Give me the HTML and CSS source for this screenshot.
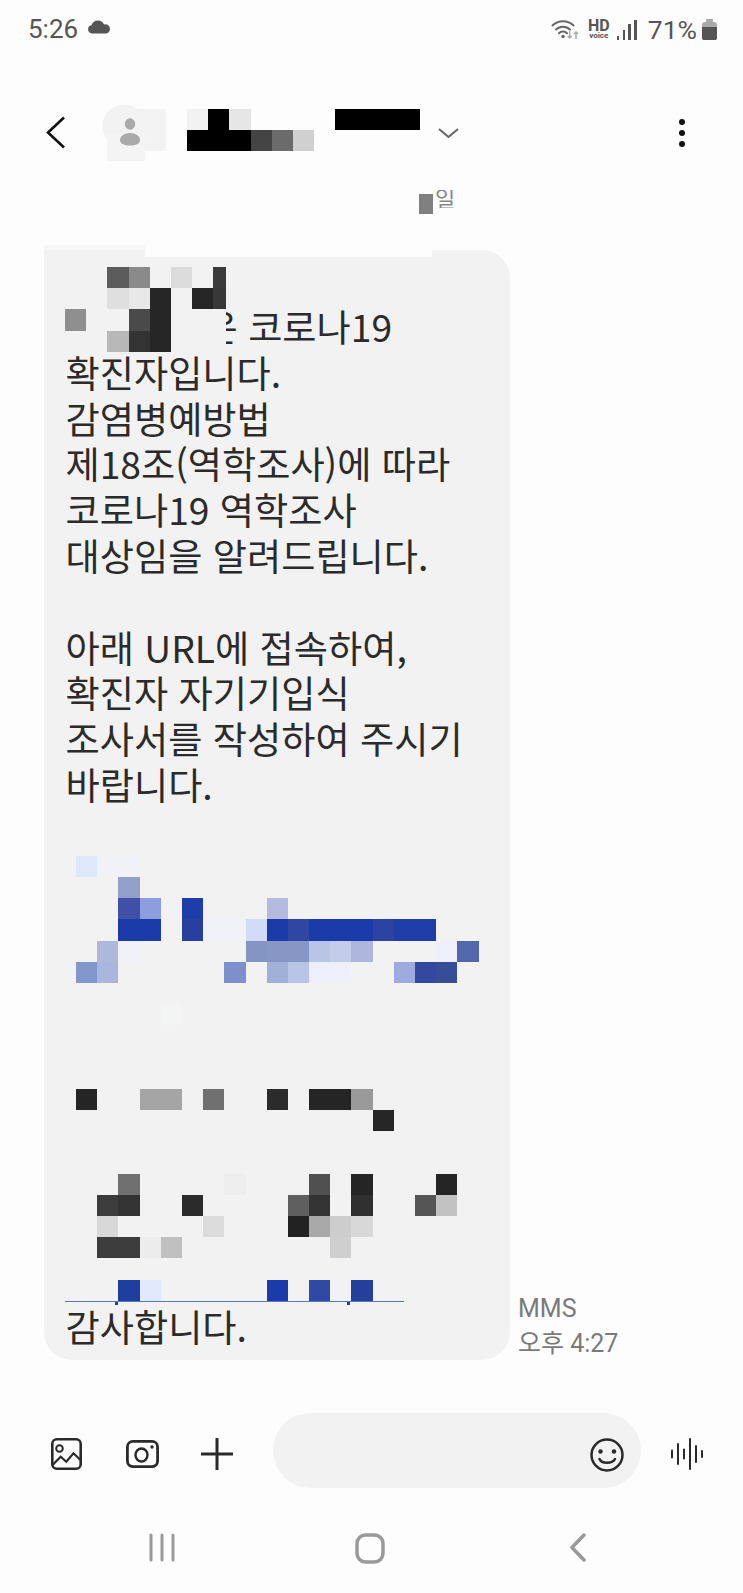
FILE: index.html
```html
<!DOCTYPE html>
<html lang="ko">
  <head>
    <meta charset="UTF-8" />
    <meta name="viewport" content="width=device-width, initial-scale=1.0" />
    <title>메시지</title>
    <link rel="stylesheet" href="styles.css">
  </head>
  <body>
    <!-- 상태 표시줄 -->
    <div class="status">
      <div class="status-left">
        <span class="time">5:26</span>
        <svg class="cloud" width="24" height="14" viewBox="0 0 24 14"><path d="M5 13.5a4.2 4.2 0 0 1-.6-8.3A7 7 0 0 1 11 .5a6.5 6.5 0 0 1 6 3.900a4.700 4.700 0 0 1 2.500 9.100z" fill="#555"/></svg>
      </div>
      <div class="status-right">
        <svg class="wifi" width="30" height="20" viewBox="0 0 30 20" fill="none">
          <g stroke="#666" stroke-width="2" stroke-linecap="round">
            <path d="M1.500 6.500A15 15 0 0 1 22.500 6.500"/>
            <path d="M5 10.500A10 10 0 0 1 19 10.500"/>
            <path d="M8 14.200A5.500 5.500 0 0 1 16 14.200"/>
          </g>
          <circle cx="12" cy="17.500" r="1.700" fill="#666"/>
          <path d="M18.700 12v7M16.700 17l2 2 2-2M25 20v-7M23 15l2-2 2 2" stroke="#aaa" stroke-width="1.500"/>
        </svg>
        <div class="hd"><b>HD</b><small>voice</small></div>
        <div class="signal"><i class="s1"></i><i class="s2"></i><i class="s3"></i><i class="s4"></i></div>
        <span class="pct">71%</span>
        <div class="battery"><i></i></div>
      </div>
    </div>

    <!-- 상단 대화 정보 -->
    <div class="head">
      <svg class="back" width="20" height="33" viewBox="0 0 20 33" fill="none"><path d="M18 1.500 2 16.500l16 15" stroke="#111" stroke-width="2.600"/></svg>
      <svg class="avatar" width="64" height="57" viewBox="0 0 64 57">
        <circle cx="22" cy="22" r="21.500" fill="#f2f2f2"/>
        <rect x="22" y="5" width="42" height="42" fill="#f3f3f3"/>
        <rect x="5" y="30" width="38" height="27" fill="#f4f4f4"/>
        <ellipse cx="28" cy="20" rx="5.200" ry="5.700" fill="#aaa"/>
        <path d="M28 29c5.500 0 10 3 10 7 0 4-4.500 5.500-10 5.500s-10-1.500-10-5.500c0-4 4.500-7 10-7z" fill="#aaa"/>
      </svg>
      <div class="mosaic name">
        <div class="row"><i class="g-f2"></i><i class="g-00"></i><i class="g-e6"></i><i></i><i></i><i></i><i></i><i class="g-00"></i><i class="g-00"></i><i class="g-00"></i><i class="g-00"></i></div>
        <div class="row"><i class="g-00"></i><i class="g-00"></i><i class="g-00"></i><i class="g-44"></i><i class="g-6b"></i><i class="g-d0"></i></div>
      </div>
      <svg class="more-down" width="21" height="10" viewBox="0 0 21 10" fill="none"><path d="M1 1l9.500 8L20 1" stroke="#666" stroke-width="2"/></svg>
      <div class="dots"><i></i><i></i><i></i></div>
    </div>

    <div class="date"><i class="date-bar"></i><span class="date-text">일</span></div>

    <!-- 메시지 -->
    <div class="thread">
      <div class="bubble">
        <div class="censor">
          <div class="mosaic">
            <div class="row"><i></i><i></i><i class="g-5c"></i><i class="g-8a"></i><i></i><i class="g-dc"></i><i></i><i class="g-3b half"></i></div>
            <div class="row"><i></i><i></i><i class="g-df"></i><i class="g-e8"></i><i class="g-26"></i><i></i><i class="g-26"></i><i class="g-38 half"></i></div>
            <div class="row"><i class="g-8f"></i><i></i><i></i><i class="g-4a"></i><i class="g-26"></i></div>
            <div class="row"><i></i><i></i><i class="g-b8"></i><i class="g-33"></i><i class="g-26"></i></div>
          </div>
        </div>
        <p class="msg">
          <span class="first">은 코로나19</span><br>
          확진자입니다.<br>
          감염병예방법<br>
          제18조(역학조사)에 따라<br>
          코로나19 역학조사<br>
          대상임을 알려드립니다.<br>
          <br>
          아래 URL에 접속하여,<br>
          확진자 자기기입식<br>
          조사서를 작성하여 주시기<br>
          바랍니다.
        </p>
        <div class="mosaic link">
          <div class="row"><i class="b-df"></i><i class="b-f0"></i><i class="b-f0"></i></div>
          <div class="row"><i></i><i></i><i class="b-94"></i></div>
          <div class="row"><i></i><i></i><i class="b-3f"></i><i class="b-8d"></i><i></i><i class="b-1f"></i><i></i><i></i><i></i><i class="b-b3"></i></div>
          <div class="row"><i></i><i></i><i class="b-1c"></i><i class="b-1c"></i><i></i><i class="b-25"></i><i class="b-f0"></i><i class="b-f0"></i><i class="b-d3"></i><i class="b-1c"></i><i class="b-2f"></i><i class="b-1c"></i><i class="b-1c"></i><i class="b-1c"></i><i class="b-2c"></i><i class="b-1f2"></i><i class="b-1f2"></i></div>
          <div class="row"><i></i><i class="b-ad"></i><i class="b-f0"></i><i></i><i></i><i></i><i></i><i></i><i class="b-84"></i><i class="b-87"></i><i class="b-87"></i><i class="b-b8"></i><i class="b-c3"></i><i class="b-ad2"></i><i></i><i></i><i></i><i class="b-ef"></i><i class="b-53"></i></div>
          <div class="row"><i class="b-849"></i><i class="b-a9"></i><i></i><i></i><i></i><i></i><i></i><i class="b-7e"></i><i></i><i class="b-a1"></i><i class="b-b8"></i><i class="b-ef"></i><i class="b-ef"></i><i></i><i></i><i class="b-9d"></i><i class="b-33"></i><i class="b-38"></i></div>
          <div class="row"></div>
          <div class="row"><i></i><i></i><i></i><i></i><i class="g-f3"></i></div>
          <div class="row"></div>
          <div class="row"></div>
          <div class="row"></div>
          <div class="row"><i class="g-25"></i><i></i><i></i><i class="g-a5"></i><i class="g-a5"></i><i></i><i class="g-70"></i><i></i><i></i><i class="g-2b"></i><i></i><i class="g-25"></i><i class="g-25"></i><i class="g-9a"></i></div>
          <div class="row"><i></i><i></i><i></i><i></i><i></i><i></i><i></i><i></i><i></i><i></i><i></i><i></i><i></i><i></i><i class="g-26"></i></div>
          <div class="row"></div>
          <div class="row"></div>
          <div class="row"><i></i><i></i><i class="g-70"></i><i></i><i></i><i></i><i></i><i class="g-ee"></i><i></i><i></i><i></i><i class="g-50"></i><i></i><i class="g-25"></i><i></i><i></i><i></i><i class="g-25"></i></div>
          <div class="row"><i></i><i class="g-3c"></i><i class="g-33"></i><i></i><i></i><i class="g-2b"></i><i></i><i></i><i></i><i></i><i class="g-5f"></i><i class="g-33"></i><i></i><i class="g-30"></i><i></i><i></i><i class="g-55"></i><i class="g-c2"></i></div>
          <div class="row"><i></i><i class="g-d8"></i><i></i><i></i><i></i><i></i><i class="g-dc"></i><i></i><i></i><i></i><i class="g-22"></i><i class="g-a8"></i><i class="g-cd"></i><i class="g-d8"></i></div>
          <div class="row"><i></i><i class="g-3c"></i><i class="g-3c"></i><i class="g-ec"></i><i class="g-c0"></i><i></i><i></i><i></i><i></i><i></i><i></i><i></i><i class="g-cf"></i></div>
          <div class="row"></div>
          <div class="row"><i></i><i></i><i class="b-1f3"></i><i class="b-e2"></i><i></i><i></i><i></i><i></i><i></i><i class="b-1b"></i><i></i><i class="b-2f4"></i><i></i><i class="b-24"></i></div>
        </div>
        <div class="underline"><i></i><i class="dot2"></i></div>
        <p class="msg thanks">감사합니다.</p>
      </div>
      <div class="meta">MMS<br>오후 4:27</div>
    </div>

    <!-- 입력창 -->
    <div class="composer">
      <svg class="tool gallery" width="31" height="32" viewBox="0 0 31 32" fill="none" stroke="#2a2a2a" stroke-width="2.600">
        <rect x="1.300" y="1.300" width="28.400" height="29.400" rx="4.500"/>
        <circle cx="8.500" cy="10.500" r="3.300" stroke-width="2"/>
        <path d="M1.500 27l8.200-8.300 5.600 5 7.200-8.400 7 6.700" stroke-width="2.200"/>
      </svg>
      <svg class="tool camera" width="33" height="32" viewBox="0 0 33 32" fill="none" stroke="#2a2a2a" stroke-width="2.800">
        <rect x="1.400" y="3.400" width="30.200" height="25.200" rx="5.500"/>
        <ellipse cx="15.500" cy="17" rx="6" ry="6.500" stroke-width="2.400"/>
        <circle cx="26" cy="9" r="1.700" fill="#2a2a2a" stroke="none"/>
      </svg>
      <svg class="tool plus" width="32" height="32" viewBox="0 0 32 32" fill="none" stroke="#2a2a2a" stroke-width="3"><path d="M16 0v32M0 16h32"/></svg>
      <div class="input">
        <svg class="smile" width="34" height="34" viewBox="0 0 34 34" fill="none" stroke="#2a2a2a" stroke-width="2.500">
          <circle cx="17" cy="17" r="15.500"/>
          <circle cx="10.500" cy="13.500" r="2.200" fill="#2a2a2a" stroke="none"/>
          <circle cx="24" cy="13.500" r="2.200" fill="#2a2a2a" stroke="none"/>
          <path d="M9.500 21c2 5 13 5 15.500 0" stroke-linecap="round"/>
        </svg>
      </div>
      <svg class="tool voice" width="34" height="32" viewBox="0 0 34 32" fill="none" stroke="#2a2a2a" stroke-width="2" stroke-linecap="round"><path d="M2 12.500v7M8 6v20M14 11.500v9M20 1v30M26 8v16M32 13v6"/></svg>
    </div>

    <!-- 하단 내비게이션 -->
    <div class="nav">
      <svg width="26" height="29" viewBox="0 0 26 29" fill="none" stroke="#999" stroke-width="3" stroke-linecap="round"><path d="M2 2v25M13 2v25M24 2v25"/></svg>
      <svg width="30" height="31" viewBox="0 0 30 31" fill="none" stroke="#999" stroke-width="3.500"><rect x="2" y="2" width="26" height="27" rx="8.500"/></svg>
      <svg width="18" height="29" viewBox="0 0 18 29" fill="none" stroke="#999" stroke-width="3.500" stroke-linecap="round" stroke-linejoin="round"><path d="M15 2 3 14.500 15 27"/></svg>
    </div>
  </body>
</html>
```

FILE: styles.css
```css
* {
  margin: 0;
  padding: 0;
  box-sizing: border-box;
}
body {
  width: 743px;
  height: 1593px;
  overflow: hidden;
  background-color: #fdfdfd;
  color: #2b2b2b;
  font-family: "Noto Sans CJK KR", "Noto Sans", sans-serif;
}

/* 상태 표시줄 */
.status {
  height: 58px;
  display: flex;
  justify-content: space-between;
  align-items: center;
  padding: 0 26px 0 28px;
  color: #555;
  font-family: Roboto, sans-serif;
  font-size: 26px;
}
.status-left,
.status-right {
  display: flex;
  align-items: center;
}
.cloud {
  margin-left: 9px;
  margin-top: -4px;
}
.wifi {
  margin-top: -1px;
}
.hd {
  width: 22px;
  margin-left: 7px;
  display: flex;
  flex-direction: column;
  align-items: center;
  line-height: 1;
  color: #555;
}
.hd b {
  font-size: 16px;
  line-height: 13px;
}
.hd small {
  font-size: 8px;
  font-weight: 700;
  line-height: 7px;
}
.signal {
  width: 20px;
  height: 20px;
  margin-left: 7px;
  display: flex;
  align-items: flex-end;
  justify-content: space-between;
  margin-top: 1px;
}
.signal i {
  width: 2.500px;
  background-color: #555;
}
.s1 { height: 4px; }
.s2 { height: 10px; }
.s3 { height: 16px; }
.s4 { height: 20px; }
.pct {
  margin-left: 11px;
  font-size: 26.500px;
}
.battery {
  width: 15px;
  height: 18px;
  margin-left: 5px;
  margin-top: 3px;
  background-color: #aaa;
  border-radius: 3px 3px 2px 2px;
  display: flex;
  align-items: flex-end;
  position: relative;
}
.battery::before {
  content: "";
  position: absolute;
  left: 4px;
  top: -3px;
  width: 7px;
  height: 3px;
  background-color: #aaa;
  border-radius: 1px 1px 0 0;
}
.battery i {
  width: 15px;
  height: 13px;
  background-color: #555;
  border-radius: 0 0 2px 2px;
}

/* 상단 */
.head {
  height: 57px;
  margin-top: 46px;
  padding-left: 46px;
  display: flex;
  align-items: flex-start;
  position: relative;
}
.back {
  margin-top: 12px;
}
.avatar {
  margin-left: 36px;
}
.name {
  margin-left: 21px;
  margin-top: 5px;
  width: 233px;
}
.more-down {
  margin-left: 18px;
  margin-top: 24px;
}
.dots {
  margin-left: 220px;
  margin-top: 15px;
  display: flex;
  flex-direction: column;
  gap: 5px;
}
.dots i {
  width: 6px;
  height: 6px;
  border-radius: 50%;
  background-color: #111;
}
.date {
  height: 24px;
  margin-top: 29px;
  padding-left: 419px;
  display: flex;
}
.date-bar {
  width: 14px;
  height: 20px;
  margin-top: 4px;
  background-color: #808080;
}
.date-text {
  width: 20px;
  height: 18px;
  margin-left: 2px;
  overflow: hidden;
  color: #888;
  font-size: 22px;
  line-height: 15px;
}

/* 모자이크 */
.mosaic .row {
  height: 21.2px;
  display: flex;
}
.mosaic i {
  width: 21.2px;
  flex: none;
}
.mosaic i.half { width: 13px; }
.g-00 { background-color: #000; }
.g-22 { background-color: #222; }
.g-25 { background-color: #252525; }
.g-26 { background-color: #262626; }
.g-2b { background-color: #2b2b2b; }
.g-30 { background-color: #303030; }
.g-33 { background-color: #333; }
.g-38 { background-color: #383838; }
.g-3b { background-color: #3b3b3b; }
.g-3c { background-color: #3c3c3c; }
.g-44 { background-color: #444; }
.g-4a { background-color: #4a4a4a; }
.g-50 { background-color: #505050; }
.g-55 { background-color: #555; }
.g-5c { background-color: #5c5c5c; }
.g-5f { background-color: #5f5f5f; }
.g-6b { background-color: #6b6b6b; }
.g-70 { background-color: #707070; }
.g-8a { background-color: #8a8a8a; }
.g-8f { background-color: #8f8f8f; }
.g-9a { background-color: #9a9a9a; }
.g-a5 { background-color: #a5a5a5; }
.g-a8 { background-color: #a8a8a8; }
.g-b8 { background-color: #b8b8b8; }
.g-c0 { background-color: #c0c0c0; }
.g-c2 { background-color: #c2c2c2; }
.g-cd { background-color: #cdcdcd; }
.g-cf { background-color: #cfcfcf; }
.g-d0 { background-color: #d0d0d0; }
.g-d8 { background-color: #d8d8d8; }
.g-dc { background-color: #dcdcdc; }
.g-df { background-color: #dfdfdf; }
.g-e6 { background-color: #e6e6e6; }
.g-e8 { background-color: #e8e8e8; }
.g-ec { background-color: #ececec; }
.g-ee { background-color: #eeeeee; }
.g-f2 { background-color: #f2f2f2; }
.g-f3 { background-color: #f3f4f4; }
.b-1b { background-color: #1b3baa; }
.b-1c { background-color: #1c3baa; }
.b-1f { background-color: #1f3da8; }
.b-1f2 { background-color: #1f3fa6; }
.b-1f3 { background-color: #1f3fa0; }
.b-24 { background-color: #24409a; }
.b-25 { background-color: #25409f; }
.b-2c { background-color: #2c449f; }
.b-2f { background-color: #2f479f; }
.b-2f4 { background-color: #2f4aa2; }
.b-33 { background-color: #33499f; }
.b-38 { background-color: #384d98; }
.b-3f { background-color: #3f50a5; }
.b-53 { background-color: #5367ad; }
.b-7e { background-color: #7e90cb; }
.b-84 { background-color: #8494c3; }
.b-849 { background-color: #8497cd; }
.b-87 { background-color: #8796c4; }
.b-8d { background-color: #8d9ee0; }
.b-94 { background-color: #949fcb; }
.b-9d { background-color: #9dabdf; }
.b-a1 { background-color: #a1b0d9; }
.b-a9 { background-color: #a9b7dc; }
.b-ad { background-color: #adb9da; }
.b-ad2 { background-color: #adb7dd; }
.b-b3 { background-color: #b3bbdf; }
.b-b8 { background-color: #b8c5e6; }
.b-c3 { background-color: #c3cdea; }
.b-d3 { background-color: #d3dcf6; }
.b-df { background-color: #dfe8fb; }
.b-e2 { background-color: #e2e9fb; }
.b-ef { background-color: #edf0fa; }
.b-f0 { background-color: #f0f2f8; }

/* 메시지 */
.thread {
  margin-top: 36px;
  padding-left: 44px;
  display: flex;
  align-items: flex-end;
  gap: 8px;
}
.bubble {
  width: 466px;
  height: 1110px;
  padding: 54px 0 0 21.500px;
  background-color: #f2f2f2;
  border-radius: 0 28px 28px 28px;
  position: relative;
}
/* 위쪽 가림 흔적 */
.bubble::before {
  content: "";
  position: absolute;
  left: 0;
  top: -5px;
  width: 101px;
  height: 5px;
  background-color: #f6f6f6;
}
.bubble::after {
  content: "";
  position: absolute;
  left: 101px;
  top: 0;
  width: 287px;
  height: 7px;
  background-color: #fdfdfd;
}
.censor {
  position: absolute;
  left: 21px;
  top: 17px;
  width: 161px;
  height: 85px;
  background-color: #f2f2f2;
}
.msg {
  font-size: 37.200px;
  line-height: 45.800px;
  white-space: nowrap;
}
.first {
  margin-left: 138px;
}
.link {
  margin-top: 48px;
  margin-left: 10.500px;
}
.underline {
  width: 339px;
  height: 1px;
  margin-left: -0.500px;
  background-color: #5b77c4;
  position: relative;
}
.underline i {
  position: absolute;
  left: 50px;
  top: 1px;
  width: 3px;
  height: 3px;
  background-color: #1f3fa0;
}
.underline i.dot2 {
  left: 282px;
}
.thanks {
  margin-top: 2px;
}
.meta {
  margin-bottom: -1px;
  color: #7a7a7a;
  font-size: 25px;
  line-height: 35px;
  white-space: nowrap;
  font-family: Roboto, "Noto Sans CJK KR", sans-serif;
}

/* 입력창 */
.composer {
  height: 75px;
  margin-top: 53px;
  padding-left: 51px;
  display: flex;
  align-items: flex-start;
}
.tool {
  margin-top: 25px;
  flex: none;
}
.camera { margin-left: 44px; }
.plus { margin-left: 42px; }
.input {
  width: 368px;
  height: 75px;
  margin-left: 40px;
  padding-right: 17px;
  background-color: #f2f2f2;
  border-radius: 38px;
  display: flex;
  justify-content: flex-end;
}
.smile {
  margin-top: 25px;
}
.voice { margin-left: 29px; }

/* 내비게이션 */
.nav {
  margin-top: 45px;
  padding-left: 149px;
  display: flex;
  align-items: flex-start;
}
.nav svg:nth-child(2) { margin-left: 180px; }
.nav svg:nth-child(3) { margin-left: 184px; }
```
